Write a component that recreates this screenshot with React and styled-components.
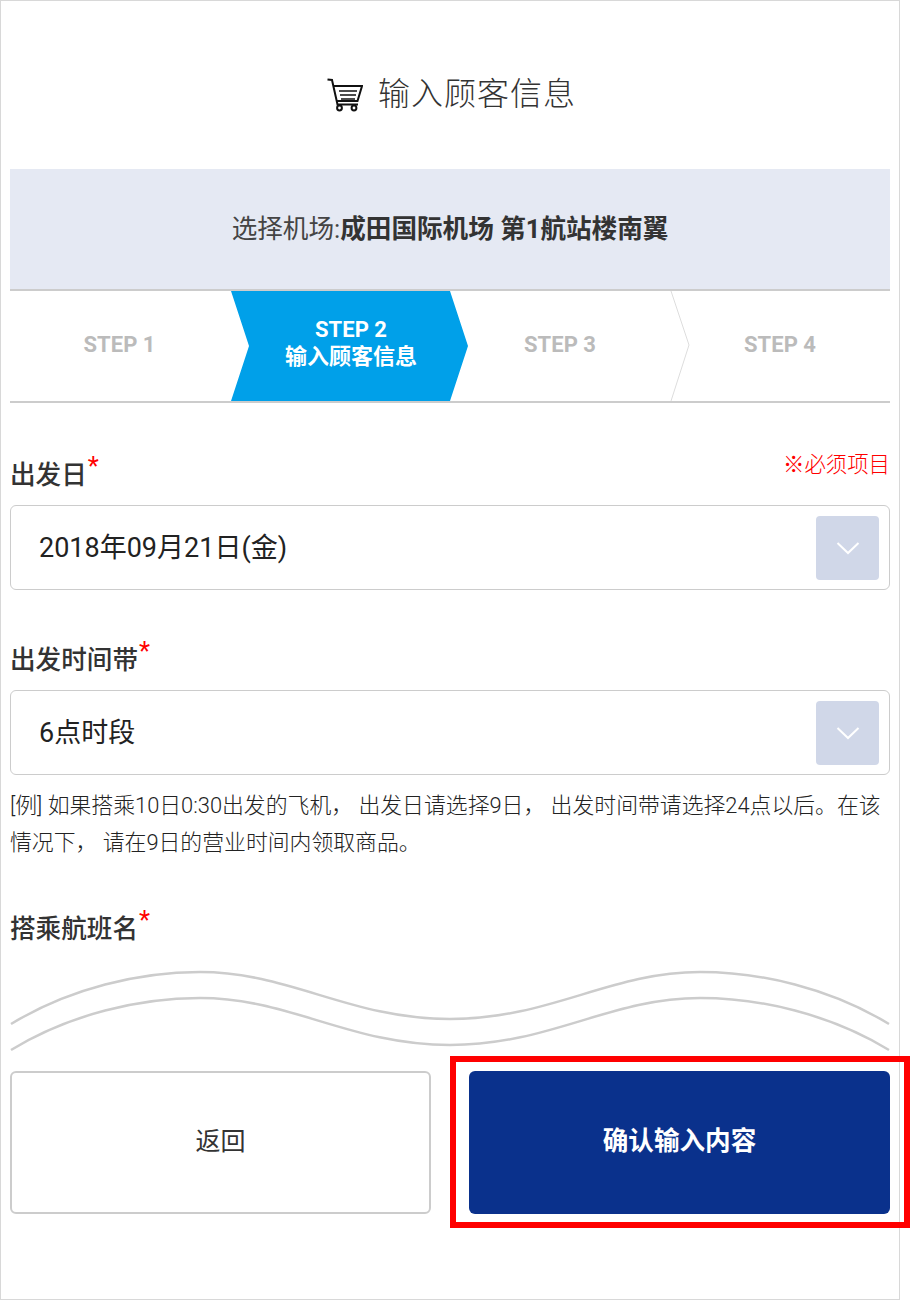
import styled, { createGlobalStyle } from "styled-components";

const FONT = `Roboto, "Noto Sans CJK SC", sans-serif`;

const STEPS = [
  { id: 1, title: "STEP 1", wide: true },
  { id: 2, title: "STEP 2", sub: "输入顾客信息", active: true },
  { id: 3, title: "STEP 3", divider: true },
  { id: 4, title: "STEP 4" },
];

function CartIcon() {
  return (
    <CartSvg viewBox="0 0 36 36" fill="none" stroke="#111" strokeWidth="2">
      <path d="M0.5 3.5 L5 4 L10.5 28.5 L31 28.5" />
      <path d="M6.5 10 L35 10 L30.5 25 L9.5 25" />
      <path d="M12 15 L30 15 M13 19 L29 19 M14 23 L28 23" strokeWidth="1.5" />
      <circle cx="12.5" cy="32" r="2.4" />
      <circle cx="27" cy="32" r="2.4" />
    </CartSvg>
  );
}

function SelectBox({ value }) {
  return (
    <Select>
      <SelectValue>{value}</SelectValue>
      <ArrowBox>
        <svg width="24" height="14" viewBox="0 0 24 14" fill="none" stroke="#fff" strokeWidth="2">
          <path d="M1.5 2 L12 12 L22.5 2" />
        </svg>
      </ArrowBox>
    </Select>
  );
}

export default function App() {
  return (
    <>
      <GlobalStyle />
      <Page>
        <Header>
          <CartIcon />
          <Title>输入顾客信息</Title>
        </Header>
        <Banner>
          选择机场:<strong>成田国际机场 第1航站楼南翼</strong>
        </Banner>
        <Steps>
          {STEPS.map((step) => (
            <Step key={step.id} $active={step.active} $wide={step.wide}>
              <span>{step.title}</span>
              {step.sub && <span>{step.sub}</span>}
              {step.divider && (
                <Divider width="20" height="110" viewBox="0 0 20 110" fill="none" stroke="#ddd">
                  <path d="M1 0 L19 54 L1 110" />
                </Divider>
              )}
            </Step>
          ))}
        </Steps>

        <LabelRow $top={51}>
          <Label>
            出发日<Star>*</Star>
          </Label>
          <Required>※必须项目</Required>
        </LabelRow>
        <SelectBox value="2018年09月21日(金)" />

        <LabelRow $top={49}>
          <Label>
            出发时间带<Star>*</Star>
          </Label>
        </LabelRow>
        <SelectBox value="6点时段" />

        <Note>
          [例] 如果搭乘10日0:30出发的飞机， 出发日请选择9日， 出发时间带请选择24点以后。在该情况下， 请在9日的营业时间内领取商品。
        </Note>

        <LabelRow $top={47}>
          <Label>
            搭乘航班名<Star>*</Star>
          </Label>
        </LabelRow>

        <Wave viewBox="0 0 880 100" fill="none" stroke="#ccc" strokeWidth="2.5">
          <path d="M1 64 C60 28 130 12 190 12 C280 12 340 59 440 59 C540 59 600 12 690 12 C750 12 820 28 879 64" />
          <path d="M1 90 C60 54 130 38 190 38 C280 38 340 85 440 85 C540 85 600 38 690 38 C750 38 820 54 879 90" />
        </Wave>

        <Buttons>
          <BackButton type="button">返回</BackButton>
          <ConfirmButton type="button">确认输入内容</ConfirmButton>
        </Buttons>
        <Highlight />
      </Page>
    </>
  );
}

const GlobalStyle = createGlobalStyle`
  html, body {
    margin: 0;
    background: #fff;
  }
  body {
    font-family: ${FONT};
    color: #333;
  }
`;

const Page = styled.div`
  position: relative;
  box-sizing: border-box;
  width: 900px;
  height: 1300px;
  padding: 0 9px;
  border: 1px solid #d8d8d8;
`;

const Header = styled.header`
  height: 168px;
  display: flex;
  align-items: center;
  justify-content: center;
  gap: 15px;
  padding: 28px 0 16px 3px;
  box-sizing: border-box;
`;

const CartSvg = styled.svg`
  width: 36px;
  height: 36px;
  margin-top: 6px;
`;

const Title = styled.h1`
  margin: 0;
  font-size: 32px;
  font-weight: 300;
  letter-spacing: 1px;
  color: #333;
`;

const Banner = styled.div`
  height: 122px;
  box-sizing: border-box;
  display: flex;
  align-items: center;
  justify-content: center;
  padding-bottom: 6px;
  background: #e5e9f3;
  border-bottom: 2px solid #ccc;
  font-size: 25.6px;
  color: #444;

  strong {
    font-weight: 700;
    color: #333;
  }
`;

const Steps = styled.div`
  height: 112px;
  box-sizing: border-box;
  display: flex;
  border-bottom: 2px solid #ccc;
`;

const Step = styled.div`
  position: relative;
  flex: none;
  box-sizing: border-box;
  width: ${(p) => (p.$active ? "237px" : p.$wide ? "221px" : "220px")};
  margin-right: ${(p) => (p.$active ? "-18px" : "0")};
  z-index: ${(p) => (p.$active ? 1 : 0)};
  display: flex;
  flex-direction: column;
  align-items: center;
  justify-content: center;
  padding: ${(p) => (p.$active ? "0 0 7px 3px" : p.$wide ? "0 2px 3px 0" : "0 0 3px")};
  font-size: 22px;
  line-height: 27px;
  font-weight: 700;
  color: ${(p) => (p.$active ? "#fff" : "#bbb")};
  background: ${(p) => (p.$active ? "#00a0e9" : "transparent")};
  clip-path: ${(p) =>
    p.$active
      ? "polygon(0 0, 219px 0, 100% 50%, 219px 100%, 0 100%, 18px 50%)"
      : "none"};
`;

const Divider = styled.svg`
  position: absolute;
  top: 0;
  right: -20px;
`;

const LabelRow = styled.div`
  box-sizing: border-box;
  height: 40px;
  margin-top: ${(p) => p.$top}px;
  margin-bottom: 11px;
  padding-bottom: 3px;
  display: flex;
  align-items: center;
  justify-content: space-between;
`;

const Label = styled.label`
  font-size: 25.6px;
  font-weight: 500;
  color: #333;
`;

const Star = styled.span`
  position: relative;
  top: -9px;
  margin-left: 1px;
  color: #f00;
  font-weight: 400;
`;

const Required = styled.span`
  position: relative;
  top: -10px;
  font-size: 21.4px;
  font-weight: 300;
  color: #f00;
`;

const Select = styled.div`
  box-sizing: border-box;
  height: 85px;
  display: flex;
  align-items: center;
  justify-content: space-between;
  padding: 0 10px 0 28px;
  background: #fff;
  border: 1px solid #ccc;
  border-radius: 6px;
  font-size: 27px;
  color: #222;
`;

const SelectValue = styled.span`
  padding-bottom: 5px;
`;

const ArrowBox = styled.div`
  width: 63px;
  height: 64px;
  display: flex;
  align-items: center;
  justify-content: center;
  background: #d0d7e8;
  border-radius: 4px;
`;

const Note = styled.p`
  margin: 12px 0 0;
  font-size: 21.85px;
  font-weight: 300;
  line-height: 37px;
  color: #222;
`;

const Wave = styled.svg`
  display: block;
  width: 880px;
  height: 100px;
  margin-top: 12px;
`;

const Buttons = styled.div`
  display: grid;
  grid-template-columns: 421px 421px;
  justify-content: space-between;
  margin-top: 11px;
`;

const BackButton = styled.button`
  height: 143px;
  padding: 0 0 8px;
  background: #fff;
  border: 2px solid #ccc;
  border-radius: 6px;
  font-family: ${FONT};
  font-size: 25px;
  color: #333;
`;

const ConfirmButton = styled.button`
  height: 143px;
  padding: 0 0 8px;
  background: #0a318c;
  border: none;
  border-radius: 6px;
  font-family: ${FONT};
  font-size: 25.6px;
  font-weight: 700;
  color: #fff;
`;

const Highlight = styled.div`
  position: absolute;
  left: 449px;
  top: 1055px;
  width: 460px;
  height: 172px;
  box-sizing: border-box;
  border: 6px solid #f00;
  pointer-events: none;
`;
